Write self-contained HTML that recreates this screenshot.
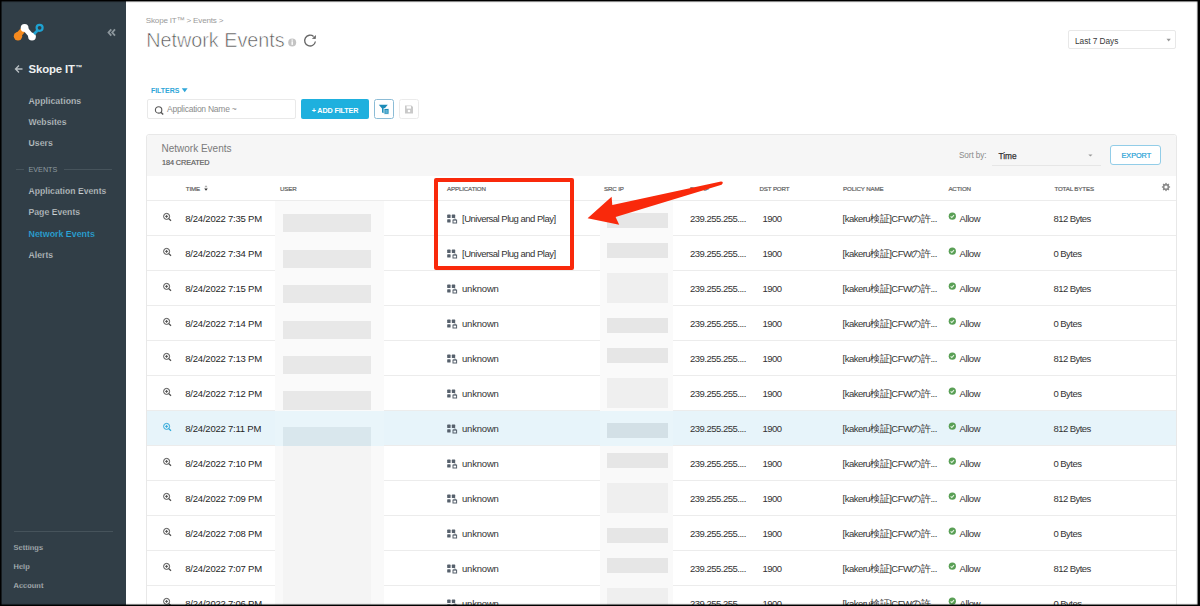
<!DOCTYPE html>
<html><head><meta charset="utf-8"><style>
html,body{margin:0;padding:0;}
body{width:1200px;height:606px;overflow:hidden;background:#000;position:relative;font-family:"Liberation Sans", sans-serif;}
#app{position:absolute;left:1px;top:1px;width:1197px;height:604px;overflow:hidden;background:#fff;}
#inner{position:absolute;left:-1px;top:-1px;width:1200px;height:606px;}
.t{position:absolute;white-space:nowrap;line-height:1;}
sup{font-size:0.62em;vertical-align:0;position:relative;top:-0.42em;margin-left:0.5px}
</style></head><body><div id="app"><div id="inner">
<div style="position:absolute;left:0;top:0;width:126px;height:606px;background:#313e47"></div>
<svg style="position:absolute;left:0;top:0" width="126" height="90" viewBox="0 0 126 90">
<path d="M16 33.5 L23 26 L26.5 30 L19.5 38.5 Z" fill="#f58a1f"/>
<circle cx="18" cy="36.3" r="4.2" fill="#f58a1f"/>
<line x1="24.6" y1="28" x2="32" y2="36.6" stroke="#fff" stroke-width="5"/>
<circle cx="24.6" cy="27.9" r="3.9" fill="#fff"/>
<circle cx="32" cy="36.6" r="3.9" fill="#fff"/>
<line x1="34" y1="34" x2="38" y2="30" stroke="#1ea3d3" stroke-width="2.6"/>
<circle cx="39.6" cy="27.8" r="3" fill="#313e47" stroke="#1ea3d3" stroke-width="2.2"/>
<path d="M111.3 29.3 L108.5 32.5 L111.3 35.7 M115 29.3 L112.2 32.5 L115 35.7" fill="none" stroke="#8d979d" stroke-width="1.8"/>
<path d="M22.5 69 L15.5 69 M19 65.5 L15.5 69 L19 72.5" fill="none" stroke="#b8bfc3" stroke-width="1.3"/>
</svg>
<div class="t" style="left:28.6px;top:64.11px;font-size:11.4px;color:#eef0f1;font-weight:700;letter-spacing:-0.15px;">Skope IT<sup>™</sup></div>
<div class="t" style="left:28.5px;top:96.86px;font-size:8.7px;color:#cdd2d5;font-weight:700;letter-spacing:0.05px;-webkit-text-stroke:0.25px #313e47;">Applications</div>
<div class="t" style="left:28.5px;top:118.08px;font-size:8.6px;color:#cdd2d5;font-weight:700;letter-spacing:0.05px;-webkit-text-stroke:0.25px #313e47;">Websites</div>
<div class="t" style="left:28.5px;top:139.26px;font-size:8.7px;color:#cdd2d5;font-weight:700;letter-spacing:0.05px;-webkit-text-stroke:0.25px #313e47;">Users</div>
<div style="position:absolute;left:16px;top:169px;width:8px;height:1px;background:#46535b"></div>
<div style="position:absolute;left:64px;top:169px;width:48px;height:1px;background:#46535b"></div>
<div class="t" style="left:28.5px;top:166.06px;font-size:7.2px;color:#8e999f;font-weight:400;letter-spacing:0px;">EVENTS</div>
<div class="t" style="left:28.5px;top:186.88px;font-size:8.55px;color:#cdd2d5;font-weight:700;letter-spacing:0.05px;-webkit-text-stroke:0.25px #313e47;">Application Events</div>
<div class="t" style="left:28.5px;top:208.08px;font-size:8.6px;color:#cdd2d5;font-weight:700;letter-spacing:0.05px;-webkit-text-stroke:0.25px #313e47;">Page Events</div>
<div class="t" style="left:28.5px;top:230.05px;font-size:8.85px;color:#29a8de;font-weight:700;letter-spacing:0px;-webkit-text-stroke:0.15px #313e47;">Network Events</div>
<div class="t" style="left:28.5px;top:250.88px;font-size:8.6px;color:#cdd2d5;font-weight:700;letter-spacing:0.05px;-webkit-text-stroke:0.25px #313e47;">Alerts</div>
<div style="position:absolute;left:14px;top:531px;width:99px;height:1px;background:#46535b"></div>
<div class="t" style="left:13.5px;top:544.03px;font-size:7.4px;color:#c3c9cc;font-weight:700;letter-spacing:0.05px;-webkit-text-stroke:0.25px #313e47;">Settings</div>
<div class="t" style="left:13.5px;top:562.83px;font-size:7.4px;color:#c3c9cc;font-weight:700;letter-spacing:0.05px;-webkit-text-stroke:0.25px #313e47;">Help</div>
<div class="t" style="left:13.5px;top:581.63px;font-size:7.4px;color:#c3c9cc;font-weight:700;letter-spacing:0.05px;-webkit-text-stroke:0.25px #313e47;">Account</div>
<div class="t" style="left:145.8px;top:16.94px;font-size:8.1px;color:#9a9a9a;font-weight:400;letter-spacing:-0.2px;">Skope IT™ &gt; Events &gt;</div>
<div class="t" style="left:146.2px;top:31.42px;font-size:19.8px;color:#555;font-weight:400;letter-spacing:0px;-webkit-text-stroke:0.6px #fff;">Network Events</div>
<svg style="position:absolute;left:280px;top:28px" width="45" height="24" viewBox="280 28 45 24">
<circle cx="292.2" cy="42.5" r="4" fill="#c4c4c4"/>
<rect x="291.5" y="41.3" width="1.4" height="3.6" fill="#fff"/>
<rect x="291.5" y="39.5" width="1.4" height="1.2" fill="#fff"/>
<path d="M315.4 41.5 A5.4 5.4 0 1 1 313.6 36.5" fill="none" stroke="#666" stroke-width="1.35"/>
<path d="M316 34.9 L315.7 38.9 L311.9 38.7 Z" fill="#666"/>
</svg>
<div style="position:absolute;left:1068px;top:30px;width:106px;height:17px;border:1px solid #e8e8e8;border-radius:2px;background:#fff"></div>
<div class="t" style="left:1075.0px;top:36.52px;font-size:8.3px;color:#3a3a3a;font-weight:400;letter-spacing:-0.05px;">Last 7 Days</div>
<svg style="position:absolute;left:1160px;top:34px" width="16" height="12"><path d="M6.5 4.8 L10.8 4.8 L8.65 7.4 Z" fill="#999"/></svg>
<div class="t" style="left:151.0px;top:86.89px;font-size:7.0px;color:#2fa6d8;font-weight:700;letter-spacing:-0.05px;">FILTERS</div>
<svg style="position:absolute;left:180px;top:86px" width="10" height="8"><path d="M1.8 2.3 L7.6 2.3 L4.7 6.3 Z" fill="#2fa6d8"/></svg>
<div style="position:absolute;left:147px;top:99px;width:147px;height:18px;border:1px solid #e9e9e9;border-radius:2px;background:#fff"></div>
<svg style="position:absolute;left:152px;top:103px" width="14" height="14"><circle cx="6.6" cy="6.9" r="3.2" fill="none" stroke="#5a5a5a" stroke-width="1.15"/><path d="M8.9 9.2 L11.2 11.5" stroke="#5a5a5a" stroke-width="1.4"/></svg>
<div class="t" style="left:167.0px;top:105.09px;font-size:8.5px;color:#8c8c8c;font-weight:400;letter-spacing:-0.25px;">Application Name ~</div>
<div style="position:absolute;left:301px;top:99px;width:68px;height:20px;background:#1eb0de;border-radius:2px"></div>
<div class="t" style="left:311.7px;top:106.66px;font-size:7.2px;color:#ffffff;font-weight:700;letter-spacing:-0.12px;">+ ADD FILTER</div>
<div style="position:absolute;left:374px;top:99px;width:18px;height:18px;border:1px solid #8cbcd6;border-radius:2.5px;background:#fff"></div>
<svg style="position:absolute;left:374px;top:99px" width="20" height="20">
<path d="M4.8 5.8 L13.8 5.8 L10.6 9.6 L10.6 14.6 L8 13.4 L8 9.6 Z" fill="#1d8cb8"/>
<rect x="10" y="9.6" width="5" height="5.6" fill="#1d8cb8" stroke="#fff" stroke-width="0.8"/>
<rect x="11.3" y="11" width="2.4" height="3" fill="#5fb3d6"/>
</svg>
<div style="position:absolute;left:399px;top:99px;width:18px;height:18px;border:1px solid #ebebeb;border-radius:2.5px;background:#fff"></div>
<svg style="position:absolute;left:399px;top:99px" width="20" height="20">
<path d="M6 6.5 L12.5 6.5 L14 8 L14 14.5 L6 14.5 Z" fill="#c9c9c9"/>
<rect x="7.6" y="7.2" width="4.4" height="2.4" fill="#fff"/>
<circle cx="10" cy="12" r="1.3" fill="#fff"/>
</svg>
<div style="position:absolute;left:146px;top:134px;width:1029px;height:482px;border:1px solid #e8e8e8;border-radius:3px;background:#fff"></div>
<div style="position:absolute;left:147px;top:135px;width:1029px;height:41px;background:#f6f6f6;border-radius:3px 3px 0 0"></div>
<div class="t" style="left:161.5px;top:143.69px;font-size:10px;color:#7a7a7a;font-weight:400;letter-spacing:0px;">Network Events</div>
<div class="t" style="left:162.0px;top:158.85px;font-size:7.3px;color:#606060;font-weight:400;letter-spacing:-0.1px;-webkit-text-stroke:0.2px #606060;">184 CREATED</div>
<div class="t" style="left:959.0px;top:151.53px;font-size:8.2px;color:#8a8a8a;font-weight:400;letter-spacing:-0.1px;">Sort by:</div>
<div class="t" style="left:998.5px;top:151.52px;font-size:8.3px;color:#333;font-weight:400;letter-spacing:0px;-webkit-text-stroke:0.25px #333;">Time</div>
<div style="position:absolute;left:992px;top:165px;width:109px;height:1px;background:#e6e6e6"></div>
<svg style="position:absolute;left:1085px;top:151px" width="10" height="8"><path d="M3.3 3.4 L7.5 3.4 L5.4 5.6 Z" fill="#999"/></svg>
<div style="position:absolute;left:1110px;top:145px;width:49px;height:18px;border:1px solid #92cde8;border-radius:3px;background:#fff"></div>
<div class="t" style="left:1121.5px;top:151.65px;font-size:7.3px;color:#1f9fd6;font-weight:400;letter-spacing:-0.05px;-webkit-text-stroke:0.2px #1f9fd6;">EXPORT</div>
<div class="t" style="left:185.8px;top:185.99px;font-size:6.2px;color:#626262;font-weight:400;letter-spacing:-0.15px;-webkit-text-stroke:0.2px #626262;">TIME</div>
<svg style="position:absolute;left:203px;top:184px" width="6" height="9"><path d="M1.4 3.3 L3 1.3 L4.6 3.3 Z" fill="#aaa"/><path d="M1.2 4.4 L4.8 4.4 L3 6.8 Z" fill="#333"/></svg>
<div class="t" style="left:280.0px;top:185.99px;font-size:6.2px;color:#626262;font-weight:400;letter-spacing:-0.15px;-webkit-text-stroke:0.2px #626262;">USER</div>
<div class="t" style="left:447.0px;top:185.99px;font-size:6.2px;color:#626262;font-weight:400;letter-spacing:-0.15px;-webkit-text-stroke:0.2px #626262;">APPLICATION</div>
<div class="t" style="left:604.0px;top:185.99px;font-size:6.2px;color:#626262;font-weight:400;letter-spacing:-0.15px;-webkit-text-stroke:0.2px #626262;">SRC IP</div>
<div class="t" style="left:690.0px;top:185.99px;font-size:6.2px;color:#626262;font-weight:400;letter-spacing:-0.15px;-webkit-text-stroke:0.2px #626262;">DST IP</div>
<div class="t" style="left:759.5px;top:185.99px;font-size:6.2px;color:#626262;font-weight:400;letter-spacing:-0.15px;-webkit-text-stroke:0.2px #626262;">DST PORT</div>
<div class="t" style="left:843.0px;top:185.99px;font-size:6.2px;color:#626262;font-weight:400;letter-spacing:-0.15px;-webkit-text-stroke:0.2px #626262;">POLICY NAME</div>
<div class="t" style="left:948.4px;top:185.99px;font-size:6.2px;color:#626262;font-weight:400;letter-spacing:-0.15px;-webkit-text-stroke:0.2px #626262;">ACTION</div>
<div class="t" style="left:1054.4px;top:185.99px;font-size:6.2px;color:#626262;font-weight:400;letter-spacing:-0.15px;-webkit-text-stroke:0.2px #626262;">TOTAL BYTES</div>
<svg style="position:absolute;left:1160px;top:181px" width="12" height="12" viewBox="0 0 12 12">
<g fill="#8c8c8c"><circle cx="6" cy="6" r="3.2"/>
<rect x="5.3" y="1.9" width="1.4" height="8.2"/><rect x="5.3" y="1.9" width="1.4" height="8.2" transform="rotate(90 6 6)"/>
<rect x="5.3" y="1.9" width="1.4" height="8.2" transform="rotate(45 6 6)"/><rect x="5.3" y="1.9" width="1.4" height="8.2" transform="rotate(-45 6 6)"/>
</g><circle cx="6" cy="6" r="1.6" fill="#fff"/></svg>
<div style="position:absolute;left:147px;top:200.3px;width:1029px;height:1px;background:#ececec"></div>
<div style="position:absolute;left:147px;top:235.3px;width:1029px;height:1px;background:#ececec"></div>
<svg style="position:absolute;left:162px;top:212.3px" width="11" height="11" viewBox="0 0 11 11"><circle cx="4.6" cy="4.4" r="3" fill="none" stroke="#4a4a4a" stroke-width="1.0"/><path d="M6.8 6.6 L9 8.8" stroke="#4a4a4a" stroke-width="1.3"/><path d="M4.6 2.9 V5.9 M3.1 4.4 H6.1" stroke="#4a4a4a" stroke-width="0.9"/></svg>
<div class="t" style="left:185.3px;top:213.56px;font-size:9.5px;color:#262626;font-weight:400;letter-spacing:-0.22px;">8/24/2022 7:35 PM</div>
<svg style="position:absolute;left:446px;top:213.9px" width="12" height="10" viewBox="0 0 12 10"><g fill="#56606c"><rect x="1.2" y="0.6" width="3.4" height="3.4" rx="0.6"/><rect x="5.8" y="0.6" width="3.4" height="3.4" rx="0.6"/><rect x="1.2" y="5.2" width="3.4" height="3.4" rx="0.6"/></g><rect x="7" y="6.1" width="3.6" height="2.9" fill="none" stroke="#56606c" stroke-width="1"/><path d="M7.9 6.1 V5.1 H9.7 V6.1" fill="none" stroke="#56606c" stroke-width="0.8"/></svg>
<div class="t" style="left:462.0px;top:213.56px;font-size:9.5px;color:#333;font-weight:400;letter-spacing:-0.5px;">[Universal Plug and Play]</div>
<div class="t" style="left:690.0px;top:213.56px;font-size:9.5px;color:#333;font-weight:400;letter-spacing:-0.5px;">239.255.255....</div>
<div class="t" style="left:762.5px;top:213.56px;font-size:9.5px;color:#333;font-weight:400;letter-spacing:-0.55px;">1900</div>
<div class="t" style="left:842.5px;top:213.56px;font-size:9.5px;color:#333;font-weight:400;letter-spacing:-0.5px;">[kakeru検証]CFWの許...</div>
<svg style="position:absolute;left:947px;top:211.3px" width="10" height="10" viewBox="0 0 10 10"><circle cx="5.3" cy="5.2" r="3.6" fill="#599f55"/><path d="M3.6 5.3 L4.8 6.5 L7 4.1" fill="none" stroke="#e8f5e6" stroke-width="1.1"/></svg>
<div class="t" style="left:959.5px;top:213.56px;font-size:9.5px;color:#333;font-weight:400;letter-spacing:-0.4px;">Allow</div>
<div class="t" style="left:1053.5px;top:213.56px;font-size:9.5px;color:#333;font-weight:400;letter-spacing:-0.55px;">812 Bytes</div>
<div style="position:absolute;left:147px;top:270.3px;width:1029px;height:1px;background:#ececec"></div>
<svg style="position:absolute;left:162px;top:247.3px" width="11" height="11" viewBox="0 0 11 11"><circle cx="4.6" cy="4.4" r="3" fill="none" stroke="#4a4a4a" stroke-width="1.0"/><path d="M6.8 6.6 L9 8.8" stroke="#4a4a4a" stroke-width="1.3"/><path d="M4.6 2.9 V5.9 M3.1 4.4 H6.1" stroke="#4a4a4a" stroke-width="0.9"/></svg>
<div class="t" style="left:185.3px;top:248.56px;font-size:9.5px;color:#262626;font-weight:400;letter-spacing:-0.22px;">8/24/2022 7:34 PM</div>
<svg style="position:absolute;left:446px;top:248.9px" width="12" height="10" viewBox="0 0 12 10"><g fill="#56606c"><rect x="1.2" y="0.6" width="3.4" height="3.4" rx="0.6"/><rect x="5.8" y="0.6" width="3.4" height="3.4" rx="0.6"/><rect x="1.2" y="5.2" width="3.4" height="3.4" rx="0.6"/></g><rect x="7" y="6.1" width="3.6" height="2.9" fill="none" stroke="#56606c" stroke-width="1"/><path d="M7.9 6.1 V5.1 H9.7 V6.1" fill="none" stroke="#56606c" stroke-width="0.8"/></svg>
<div class="t" style="left:462.0px;top:248.56px;font-size:9.5px;color:#333;font-weight:400;letter-spacing:-0.5px;">[Universal Plug and Play]</div>
<div class="t" style="left:690.0px;top:248.56px;font-size:9.5px;color:#333;font-weight:400;letter-spacing:-0.5px;">239.255.255....</div>
<div class="t" style="left:762.5px;top:248.56px;font-size:9.5px;color:#333;font-weight:400;letter-spacing:-0.55px;">1900</div>
<div class="t" style="left:842.5px;top:248.56px;font-size:9.5px;color:#333;font-weight:400;letter-spacing:-0.5px;">[kakeru検証]CFWの許...</div>
<svg style="position:absolute;left:947px;top:246.3px" width="10" height="10" viewBox="0 0 10 10"><circle cx="5.3" cy="5.2" r="3.6" fill="#599f55"/><path d="M3.6 5.3 L4.8 6.5 L7 4.1" fill="none" stroke="#e8f5e6" stroke-width="1.1"/></svg>
<div class="t" style="left:959.5px;top:248.56px;font-size:9.5px;color:#333;font-weight:400;letter-spacing:-0.4px;">Allow</div>
<div class="t" style="left:1053.5px;top:248.56px;font-size:9.5px;color:#333;font-weight:400;letter-spacing:-0.55px;">0 Bytes</div>
<div style="position:absolute;left:147px;top:305.3px;width:1029px;height:1px;background:#ececec"></div>
<svg style="position:absolute;left:162px;top:282.3px" width="11" height="11" viewBox="0 0 11 11"><circle cx="4.6" cy="4.4" r="3" fill="none" stroke="#4a4a4a" stroke-width="1.0"/><path d="M6.8 6.6 L9 8.8" stroke="#4a4a4a" stroke-width="1.3"/><path d="M4.6 2.9 V5.9 M3.1 4.4 H6.1" stroke="#4a4a4a" stroke-width="0.9"/></svg>
<div class="t" style="left:185.3px;top:283.56px;font-size:9.5px;color:#262626;font-weight:400;letter-spacing:-0.22px;">8/24/2022 7:15 PM</div>
<svg style="position:absolute;left:446px;top:283.9px" width="12" height="10" viewBox="0 0 12 10"><g fill="#56606c"><rect x="1.2" y="0.6" width="3.4" height="3.4" rx="0.6"/><rect x="5.8" y="0.6" width="3.4" height="3.4" rx="0.6"/><rect x="1.2" y="5.2" width="3.4" height="3.4" rx="0.6"/></g><rect x="7" y="6.1" width="3.6" height="2.9" fill="none" stroke="#56606c" stroke-width="1"/><path d="M7.9 6.1 V5.1 H9.7 V6.1" fill="none" stroke="#56606c" stroke-width="0.8"/></svg>
<div class="t" style="left:462.0px;top:283.56px;font-size:9.5px;color:#333;font-weight:400;letter-spacing:-0.2px;">unknown</div>
<div class="t" style="left:690.0px;top:283.56px;font-size:9.5px;color:#333;font-weight:400;letter-spacing:-0.5px;">239.255.255....</div>
<div class="t" style="left:762.5px;top:283.56px;font-size:9.5px;color:#333;font-weight:400;letter-spacing:-0.55px;">1900</div>
<div class="t" style="left:842.5px;top:283.56px;font-size:9.5px;color:#333;font-weight:400;letter-spacing:-0.5px;">[kakeru検証]CFWの許...</div>
<svg style="position:absolute;left:947px;top:281.3px" width="10" height="10" viewBox="0 0 10 10"><circle cx="5.3" cy="5.2" r="3.6" fill="#599f55"/><path d="M3.6 5.3 L4.8 6.5 L7 4.1" fill="none" stroke="#e8f5e6" stroke-width="1.1"/></svg>
<div class="t" style="left:959.5px;top:283.56px;font-size:9.5px;color:#333;font-weight:400;letter-spacing:-0.4px;">Allow</div>
<div class="t" style="left:1053.5px;top:283.56px;font-size:9.5px;color:#333;font-weight:400;letter-spacing:-0.55px;">812 Bytes</div>
<div style="position:absolute;left:147px;top:340.3px;width:1029px;height:1px;background:#ececec"></div>
<svg style="position:absolute;left:162px;top:317.3px" width="11" height="11" viewBox="0 0 11 11"><circle cx="4.6" cy="4.4" r="3" fill="none" stroke="#4a4a4a" stroke-width="1.0"/><path d="M6.8 6.6 L9 8.8" stroke="#4a4a4a" stroke-width="1.3"/><path d="M4.6 2.9 V5.9 M3.1 4.4 H6.1" stroke="#4a4a4a" stroke-width="0.9"/></svg>
<div class="t" style="left:185.3px;top:318.56px;font-size:9.5px;color:#262626;font-weight:400;letter-spacing:-0.22px;">8/24/2022 7:14 PM</div>
<svg style="position:absolute;left:446px;top:318.9px" width="12" height="10" viewBox="0 0 12 10"><g fill="#56606c"><rect x="1.2" y="0.6" width="3.4" height="3.4" rx="0.6"/><rect x="5.8" y="0.6" width="3.4" height="3.4" rx="0.6"/><rect x="1.2" y="5.2" width="3.4" height="3.4" rx="0.6"/></g><rect x="7" y="6.1" width="3.6" height="2.9" fill="none" stroke="#56606c" stroke-width="1"/><path d="M7.9 6.1 V5.1 H9.7 V6.1" fill="none" stroke="#56606c" stroke-width="0.8"/></svg>
<div class="t" style="left:462.0px;top:318.56px;font-size:9.5px;color:#333;font-weight:400;letter-spacing:-0.2px;">unknown</div>
<div class="t" style="left:690.0px;top:318.56px;font-size:9.5px;color:#333;font-weight:400;letter-spacing:-0.5px;">239.255.255....</div>
<div class="t" style="left:762.5px;top:318.56px;font-size:9.5px;color:#333;font-weight:400;letter-spacing:-0.55px;">1900</div>
<div class="t" style="left:842.5px;top:318.56px;font-size:9.5px;color:#333;font-weight:400;letter-spacing:-0.5px;">[kakeru検証]CFWの許...</div>
<svg style="position:absolute;left:947px;top:316.3px" width="10" height="10" viewBox="0 0 10 10"><circle cx="5.3" cy="5.2" r="3.6" fill="#599f55"/><path d="M3.6 5.3 L4.8 6.5 L7 4.1" fill="none" stroke="#e8f5e6" stroke-width="1.1"/></svg>
<div class="t" style="left:959.5px;top:318.56px;font-size:9.5px;color:#333;font-weight:400;letter-spacing:-0.4px;">Allow</div>
<div class="t" style="left:1053.5px;top:318.56px;font-size:9.5px;color:#333;font-weight:400;letter-spacing:-0.55px;">0 Bytes</div>
<div style="position:absolute;left:147px;top:375.3px;width:1029px;height:1px;background:#ececec"></div>
<svg style="position:absolute;left:162px;top:352.3px" width="11" height="11" viewBox="0 0 11 11"><circle cx="4.6" cy="4.4" r="3" fill="none" stroke="#4a4a4a" stroke-width="1.0"/><path d="M6.8 6.6 L9 8.8" stroke="#4a4a4a" stroke-width="1.3"/><path d="M4.6 2.9 V5.9 M3.1 4.4 H6.1" stroke="#4a4a4a" stroke-width="0.9"/></svg>
<div class="t" style="left:185.3px;top:353.56px;font-size:9.5px;color:#262626;font-weight:400;letter-spacing:-0.22px;">8/24/2022 7:13 PM</div>
<svg style="position:absolute;left:446px;top:353.9px" width="12" height="10" viewBox="0 0 12 10"><g fill="#56606c"><rect x="1.2" y="0.6" width="3.4" height="3.4" rx="0.6"/><rect x="5.8" y="0.6" width="3.4" height="3.4" rx="0.6"/><rect x="1.2" y="5.2" width="3.4" height="3.4" rx="0.6"/></g><rect x="7" y="6.1" width="3.6" height="2.9" fill="none" stroke="#56606c" stroke-width="1"/><path d="M7.9 6.1 V5.1 H9.7 V6.1" fill="none" stroke="#56606c" stroke-width="0.8"/></svg>
<div class="t" style="left:462.0px;top:353.56px;font-size:9.5px;color:#333;font-weight:400;letter-spacing:-0.2px;">unknown</div>
<div class="t" style="left:690.0px;top:353.56px;font-size:9.5px;color:#333;font-weight:400;letter-spacing:-0.5px;">239.255.255....</div>
<div class="t" style="left:762.5px;top:353.56px;font-size:9.5px;color:#333;font-weight:400;letter-spacing:-0.55px;">1900</div>
<div class="t" style="left:842.5px;top:353.56px;font-size:9.5px;color:#333;font-weight:400;letter-spacing:-0.5px;">[kakeru検証]CFWの許...</div>
<svg style="position:absolute;left:947px;top:351.3px" width="10" height="10" viewBox="0 0 10 10"><circle cx="5.3" cy="5.2" r="3.6" fill="#599f55"/><path d="M3.6 5.3 L4.8 6.5 L7 4.1" fill="none" stroke="#e8f5e6" stroke-width="1.1"/></svg>
<div class="t" style="left:959.5px;top:353.56px;font-size:9.5px;color:#333;font-weight:400;letter-spacing:-0.4px;">Allow</div>
<div class="t" style="left:1053.5px;top:353.56px;font-size:9.5px;color:#333;font-weight:400;letter-spacing:-0.55px;">812 Bytes</div>
<div style="position:absolute;left:147px;top:410.3px;width:1029px;height:1px;background:#ececec"></div>
<svg style="position:absolute;left:162px;top:387.3px" width="11" height="11" viewBox="0 0 11 11"><circle cx="4.6" cy="4.4" r="3" fill="none" stroke="#4a4a4a" stroke-width="1.0"/><path d="M6.8 6.6 L9 8.8" stroke="#4a4a4a" stroke-width="1.3"/><path d="M4.6 2.9 V5.9 M3.1 4.4 H6.1" stroke="#4a4a4a" stroke-width="0.9"/></svg>
<div class="t" style="left:185.3px;top:388.56px;font-size:9.5px;color:#262626;font-weight:400;letter-spacing:-0.22px;">8/24/2022 7:12 PM</div>
<svg style="position:absolute;left:446px;top:388.9px" width="12" height="10" viewBox="0 0 12 10"><g fill="#56606c"><rect x="1.2" y="0.6" width="3.4" height="3.4" rx="0.6"/><rect x="5.8" y="0.6" width="3.4" height="3.4" rx="0.6"/><rect x="1.2" y="5.2" width="3.4" height="3.4" rx="0.6"/></g><rect x="7" y="6.1" width="3.6" height="2.9" fill="none" stroke="#56606c" stroke-width="1"/><path d="M7.9 6.1 V5.1 H9.7 V6.1" fill="none" stroke="#56606c" stroke-width="0.8"/></svg>
<div class="t" style="left:462.0px;top:388.56px;font-size:9.5px;color:#333;font-weight:400;letter-spacing:-0.2px;">unknown</div>
<div class="t" style="left:690.0px;top:388.56px;font-size:9.5px;color:#333;font-weight:400;letter-spacing:-0.5px;">239.255.255....</div>
<div class="t" style="left:762.5px;top:388.56px;font-size:9.5px;color:#333;font-weight:400;letter-spacing:-0.55px;">1900</div>
<div class="t" style="left:842.5px;top:388.56px;font-size:9.5px;color:#333;font-weight:400;letter-spacing:-0.5px;">[kakeru検証]CFWの許...</div>
<svg style="position:absolute;left:947px;top:386.3px" width="10" height="10" viewBox="0 0 10 10"><circle cx="5.3" cy="5.2" r="3.6" fill="#599f55"/><path d="M3.6 5.3 L4.8 6.5 L7 4.1" fill="none" stroke="#e8f5e6" stroke-width="1.1"/></svg>
<div class="t" style="left:959.5px;top:388.56px;font-size:9.5px;color:#333;font-weight:400;letter-spacing:-0.4px;">Allow</div>
<div class="t" style="left:1053.5px;top:388.56px;font-size:9.5px;color:#333;font-weight:400;letter-spacing:-0.55px;">0 Bytes</div>
<div style="position:absolute;left:147px;top:411.0px;width:1029px;height:35px;background:#e7f4fa"></div>
<div style="position:absolute;left:147px;top:445.3px;width:1029px;height:1px;background:#ececec"></div>
<svg style="position:absolute;left:162px;top:422.3px" width="11" height="11" viewBox="0 0 11 11"><circle cx="4.6" cy="4.4" r="3" fill="none" stroke="#2aa6d8" stroke-width="1.0"/><path d="M6.8 6.6 L9 8.8" stroke="#2aa6d8" stroke-width="1.3"/><path d="M4.6 2.9 V5.9 M3.1 4.4 H6.1" stroke="#2aa6d8" stroke-width="0.9"/></svg>
<div class="t" style="left:185.3px;top:423.56px;font-size:9.5px;color:#262626;font-weight:400;letter-spacing:-0.22px;">8/24/2022 7:11 PM</div>
<svg style="position:absolute;left:446px;top:423.9px" width="12" height="10" viewBox="0 0 12 10"><g fill="#56606c"><rect x="1.2" y="0.6" width="3.4" height="3.4" rx="0.6"/><rect x="5.8" y="0.6" width="3.4" height="3.4" rx="0.6"/><rect x="1.2" y="5.2" width="3.4" height="3.4" rx="0.6"/></g><rect x="7" y="6.1" width="3.6" height="2.9" fill="none" stroke="#56606c" stroke-width="1"/><path d="M7.9 6.1 V5.1 H9.7 V6.1" fill="none" stroke="#56606c" stroke-width="0.8"/></svg>
<div class="t" style="left:462.0px;top:423.56px;font-size:9.5px;color:#333;font-weight:400;letter-spacing:-0.2px;">unknown</div>
<div class="t" style="left:690.0px;top:423.56px;font-size:9.5px;color:#333;font-weight:400;letter-spacing:-0.5px;">239.255.255....</div>
<div class="t" style="left:762.5px;top:423.56px;font-size:9.5px;color:#333;font-weight:400;letter-spacing:-0.55px;">1900</div>
<div class="t" style="left:842.5px;top:423.56px;font-size:9.5px;color:#333;font-weight:400;letter-spacing:-0.5px;">[kakeru検証]CFWの許...</div>
<svg style="position:absolute;left:947px;top:421.3px" width="10" height="10" viewBox="0 0 10 10"><circle cx="5.3" cy="5.2" r="3.6" fill="#599f55"/><path d="M3.6 5.3 L4.8 6.5 L7 4.1" fill="none" stroke="#e8f5e6" stroke-width="1.1"/></svg>
<div class="t" style="left:959.5px;top:423.56px;font-size:9.5px;color:#333;font-weight:400;letter-spacing:-0.4px;">Allow</div>
<div class="t" style="left:1053.5px;top:423.56px;font-size:9.5px;color:#333;font-weight:400;letter-spacing:-0.55px;">812 Bytes</div>
<div style="position:absolute;left:147px;top:480.3px;width:1029px;height:1px;background:#ececec"></div>
<svg style="position:absolute;left:162px;top:457.3px" width="11" height="11" viewBox="0 0 11 11"><circle cx="4.6" cy="4.4" r="3" fill="none" stroke="#4a4a4a" stroke-width="1.0"/><path d="M6.8 6.6 L9 8.8" stroke="#4a4a4a" stroke-width="1.3"/><path d="M4.6 2.9 V5.9 M3.1 4.4 H6.1" stroke="#4a4a4a" stroke-width="0.9"/></svg>
<div class="t" style="left:185.3px;top:458.56px;font-size:9.5px;color:#262626;font-weight:400;letter-spacing:-0.22px;">8/24/2022 7:10 PM</div>
<svg style="position:absolute;left:446px;top:458.9px" width="12" height="10" viewBox="0 0 12 10"><g fill="#56606c"><rect x="1.2" y="0.6" width="3.4" height="3.4" rx="0.6"/><rect x="5.8" y="0.6" width="3.4" height="3.4" rx="0.6"/><rect x="1.2" y="5.2" width="3.4" height="3.4" rx="0.6"/></g><rect x="7" y="6.1" width="3.6" height="2.9" fill="none" stroke="#56606c" stroke-width="1"/><path d="M7.9 6.1 V5.1 H9.7 V6.1" fill="none" stroke="#56606c" stroke-width="0.8"/></svg>
<div class="t" style="left:462.0px;top:458.56px;font-size:9.5px;color:#333;font-weight:400;letter-spacing:-0.2px;">unknown</div>
<div class="t" style="left:690.0px;top:458.56px;font-size:9.5px;color:#333;font-weight:400;letter-spacing:-0.5px;">239.255.255....</div>
<div class="t" style="left:762.5px;top:458.56px;font-size:9.5px;color:#333;font-weight:400;letter-spacing:-0.55px;">1900</div>
<div class="t" style="left:842.5px;top:458.56px;font-size:9.5px;color:#333;font-weight:400;letter-spacing:-0.5px;">[kakeru検証]CFWの許...</div>
<svg style="position:absolute;left:947px;top:456.3px" width="10" height="10" viewBox="0 0 10 10"><circle cx="5.3" cy="5.2" r="3.6" fill="#599f55"/><path d="M3.6 5.3 L4.8 6.5 L7 4.1" fill="none" stroke="#e8f5e6" stroke-width="1.1"/></svg>
<div class="t" style="left:959.5px;top:458.56px;font-size:9.5px;color:#333;font-weight:400;letter-spacing:-0.4px;">Allow</div>
<div class="t" style="left:1053.5px;top:458.56px;font-size:9.5px;color:#333;font-weight:400;letter-spacing:-0.55px;">0 Bytes</div>
<div style="position:absolute;left:147px;top:515.3px;width:1029px;height:1px;background:#ececec"></div>
<svg style="position:absolute;left:162px;top:492.3px" width="11" height="11" viewBox="0 0 11 11"><circle cx="4.6" cy="4.4" r="3" fill="none" stroke="#4a4a4a" stroke-width="1.0"/><path d="M6.8 6.6 L9 8.8" stroke="#4a4a4a" stroke-width="1.3"/><path d="M4.6 2.9 V5.9 M3.1 4.4 H6.1" stroke="#4a4a4a" stroke-width="0.9"/></svg>
<div class="t" style="left:185.3px;top:493.56px;font-size:9.5px;color:#262626;font-weight:400;letter-spacing:-0.22px;">8/24/2022 7:09 PM</div>
<svg style="position:absolute;left:446px;top:493.9px" width="12" height="10" viewBox="0 0 12 10"><g fill="#56606c"><rect x="1.2" y="0.6" width="3.4" height="3.4" rx="0.6"/><rect x="5.8" y="0.6" width="3.4" height="3.4" rx="0.6"/><rect x="1.2" y="5.2" width="3.4" height="3.4" rx="0.6"/></g><rect x="7" y="6.1" width="3.6" height="2.9" fill="none" stroke="#56606c" stroke-width="1"/><path d="M7.9 6.1 V5.1 H9.7 V6.1" fill="none" stroke="#56606c" stroke-width="0.8"/></svg>
<div class="t" style="left:462.0px;top:493.56px;font-size:9.5px;color:#333;font-weight:400;letter-spacing:-0.2px;">unknown</div>
<div class="t" style="left:690.0px;top:493.56px;font-size:9.5px;color:#333;font-weight:400;letter-spacing:-0.5px;">239.255.255....</div>
<div class="t" style="left:762.5px;top:493.56px;font-size:9.5px;color:#333;font-weight:400;letter-spacing:-0.55px;">1900</div>
<div class="t" style="left:842.5px;top:493.56px;font-size:9.5px;color:#333;font-weight:400;letter-spacing:-0.5px;">[kakeru検証]CFWの許...</div>
<svg style="position:absolute;left:947px;top:491.3px" width="10" height="10" viewBox="0 0 10 10"><circle cx="5.3" cy="5.2" r="3.6" fill="#599f55"/><path d="M3.6 5.3 L4.8 6.5 L7 4.1" fill="none" stroke="#e8f5e6" stroke-width="1.1"/></svg>
<div class="t" style="left:959.5px;top:493.56px;font-size:9.5px;color:#333;font-weight:400;letter-spacing:-0.4px;">Allow</div>
<div class="t" style="left:1053.5px;top:493.56px;font-size:9.5px;color:#333;font-weight:400;letter-spacing:-0.55px;">812 Bytes</div>
<div style="position:absolute;left:147px;top:550.3px;width:1029px;height:1px;background:#ececec"></div>
<svg style="position:absolute;left:162px;top:527.3px" width="11" height="11" viewBox="0 0 11 11"><circle cx="4.6" cy="4.4" r="3" fill="none" stroke="#4a4a4a" stroke-width="1.0"/><path d="M6.8 6.6 L9 8.8" stroke="#4a4a4a" stroke-width="1.3"/><path d="M4.6 2.9 V5.9 M3.1 4.4 H6.1" stroke="#4a4a4a" stroke-width="0.9"/></svg>
<div class="t" style="left:185.3px;top:528.56px;font-size:9.5px;color:#262626;font-weight:400;letter-spacing:-0.22px;">8/24/2022 7:08 PM</div>
<svg style="position:absolute;left:446px;top:528.9px" width="12" height="10" viewBox="0 0 12 10"><g fill="#56606c"><rect x="1.2" y="0.6" width="3.4" height="3.4" rx="0.6"/><rect x="5.8" y="0.6" width="3.4" height="3.4" rx="0.6"/><rect x="1.2" y="5.2" width="3.4" height="3.4" rx="0.6"/></g><rect x="7" y="6.1" width="3.6" height="2.9" fill="none" stroke="#56606c" stroke-width="1"/><path d="M7.9 6.1 V5.1 H9.7 V6.1" fill="none" stroke="#56606c" stroke-width="0.8"/></svg>
<div class="t" style="left:462.0px;top:528.56px;font-size:9.5px;color:#333;font-weight:400;letter-spacing:-0.2px;">unknown</div>
<div class="t" style="left:690.0px;top:528.56px;font-size:9.5px;color:#333;font-weight:400;letter-spacing:-0.5px;">239.255.255....</div>
<div class="t" style="left:762.5px;top:528.56px;font-size:9.5px;color:#333;font-weight:400;letter-spacing:-0.55px;">1900</div>
<div class="t" style="left:842.5px;top:528.56px;font-size:9.5px;color:#333;font-weight:400;letter-spacing:-0.5px;">[kakeru検証]CFWの許...</div>
<svg style="position:absolute;left:947px;top:526.3px" width="10" height="10" viewBox="0 0 10 10"><circle cx="5.3" cy="5.2" r="3.6" fill="#599f55"/><path d="M3.6 5.3 L4.8 6.5 L7 4.1" fill="none" stroke="#e8f5e6" stroke-width="1.1"/></svg>
<div class="t" style="left:959.5px;top:528.56px;font-size:9.5px;color:#333;font-weight:400;letter-spacing:-0.4px;">Allow</div>
<div class="t" style="left:1053.5px;top:528.56px;font-size:9.5px;color:#333;font-weight:400;letter-spacing:-0.55px;">0 Bytes</div>
<div style="position:absolute;left:147px;top:585.3px;width:1029px;height:1px;background:#ececec"></div>
<svg style="position:absolute;left:162px;top:562.3px" width="11" height="11" viewBox="0 0 11 11"><circle cx="4.6" cy="4.4" r="3" fill="none" stroke="#4a4a4a" stroke-width="1.0"/><path d="M6.8 6.6 L9 8.8" stroke="#4a4a4a" stroke-width="1.3"/><path d="M4.6 2.9 V5.9 M3.1 4.4 H6.1" stroke="#4a4a4a" stroke-width="0.9"/></svg>
<div class="t" style="left:185.3px;top:563.56px;font-size:9.5px;color:#262626;font-weight:400;letter-spacing:-0.22px;">8/24/2022 7:07 PM</div>
<svg style="position:absolute;left:446px;top:563.9px" width="12" height="10" viewBox="0 0 12 10"><g fill="#56606c"><rect x="1.2" y="0.6" width="3.4" height="3.4" rx="0.6"/><rect x="5.8" y="0.6" width="3.4" height="3.4" rx="0.6"/><rect x="1.2" y="5.2" width="3.4" height="3.4" rx="0.6"/></g><rect x="7" y="6.1" width="3.6" height="2.9" fill="none" stroke="#56606c" stroke-width="1"/><path d="M7.9 6.1 V5.1 H9.7 V6.1" fill="none" stroke="#56606c" stroke-width="0.8"/></svg>
<div class="t" style="left:462.0px;top:563.56px;font-size:9.5px;color:#333;font-weight:400;letter-spacing:-0.2px;">unknown</div>
<div class="t" style="left:690.0px;top:563.56px;font-size:9.5px;color:#333;font-weight:400;letter-spacing:-0.5px;">239.255.255....</div>
<div class="t" style="left:762.5px;top:563.56px;font-size:9.5px;color:#333;font-weight:400;letter-spacing:-0.55px;">1900</div>
<div class="t" style="left:842.5px;top:563.56px;font-size:9.5px;color:#333;font-weight:400;letter-spacing:-0.5px;">[kakeru検証]CFWの許...</div>
<svg style="position:absolute;left:947px;top:561.3px" width="10" height="10" viewBox="0 0 10 10"><circle cx="5.3" cy="5.2" r="3.6" fill="#599f55"/><path d="M3.6 5.3 L4.8 6.5 L7 4.1" fill="none" stroke="#e8f5e6" stroke-width="1.1"/></svg>
<div class="t" style="left:959.5px;top:563.56px;font-size:9.5px;color:#333;font-weight:400;letter-spacing:-0.4px;">Allow</div>
<div class="t" style="left:1053.5px;top:563.56px;font-size:9.5px;color:#333;font-weight:400;letter-spacing:-0.55px;">812 Bytes</div>
<div style="position:absolute;left:147px;top:620.3px;width:1029px;height:1px;background:#ececec"></div>
<svg style="position:absolute;left:162px;top:597.3px" width="11" height="11" viewBox="0 0 11 11"><circle cx="4.6" cy="4.4" r="3" fill="none" stroke="#4a4a4a" stroke-width="1.0"/><path d="M6.8 6.6 L9 8.8" stroke="#4a4a4a" stroke-width="1.3"/><path d="M4.6 2.9 V5.9 M3.1 4.4 H6.1" stroke="#4a4a4a" stroke-width="0.9"/></svg>
<div class="t" style="left:185.3px;top:598.56px;font-size:9.5px;color:#262626;font-weight:400;letter-spacing:-0.22px;">8/24/2022 7:06 PM</div>
<svg style="position:absolute;left:446px;top:598.9px" width="12" height="10" viewBox="0 0 12 10"><g fill="#56606c"><rect x="1.2" y="0.6" width="3.4" height="3.4" rx="0.6"/><rect x="5.8" y="0.6" width="3.4" height="3.4" rx="0.6"/><rect x="1.2" y="5.2" width="3.4" height="3.4" rx="0.6"/></g><rect x="7" y="6.1" width="3.6" height="2.9" fill="none" stroke="#56606c" stroke-width="1"/><path d="M7.9 6.1 V5.1 H9.7 V6.1" fill="none" stroke="#56606c" stroke-width="0.8"/></svg>
<div class="t" style="left:462.0px;top:598.56px;font-size:9.5px;color:#333;font-weight:400;letter-spacing:-0.2px;">unknown</div>
<div class="t" style="left:690.0px;top:598.56px;font-size:9.5px;color:#333;font-weight:400;letter-spacing:-0.5px;">239.255.255....</div>
<div class="t" style="left:762.5px;top:598.56px;font-size:9.5px;color:#333;font-weight:400;letter-spacing:-0.55px;">1900</div>
<div class="t" style="left:842.5px;top:598.56px;font-size:9.5px;color:#333;font-weight:400;letter-spacing:-0.5px;">[kakeru検証]CFWの許...</div>
<svg style="position:absolute;left:947px;top:596.3px" width="10" height="10" viewBox="0 0 10 10"><circle cx="5.3" cy="5.2" r="3.6" fill="#599f55"/><path d="M3.6 5.3 L4.8 6.5 L7 4.1" fill="none" stroke="#e8f5e6" stroke-width="1.1"/></svg>
<div class="t" style="left:959.5px;top:598.56px;font-size:9.5px;color:#333;font-weight:400;letter-spacing:-0.4px;">Allow</div>
<div class="t" style="left:1053.5px;top:598.56px;font-size:9.5px;color:#333;font-weight:400;letter-spacing:-0.55px;">0 Bytes</div>
<div style="position:absolute;left:275px;top:201.3px;width:109px;height:35px;background:#fafafa"></div>
<div style="position:absolute;left:600px;top:201.3px;width:73px;height:35px;background:#fafafa"></div>
<div style="position:absolute;left:283px;top:214.3px;width:88px;height:18px;background:#e8e8e8"></div>
<div style="position:absolute;left:607px;top:212.5px;width:61px;height:15.2px;background:#e6e6e6"></div>
<div style="position:absolute;left:275px;top:236.3px;width:109px;height:35px;background:#fafafa"></div>
<div style="position:absolute;left:600px;top:236.3px;width:73px;height:35px;background:#fafafa"></div>
<div style="position:absolute;left:283px;top:249.7px;width:88px;height:18px;background:#e8e8e8"></div>
<div style="position:absolute;left:607px;top:243.1px;width:61px;height:15px;background:#e6e6e6"></div>
<div style="position:absolute;left:275px;top:271.3px;width:109px;height:35px;background:#fafafa"></div>
<div style="position:absolute;left:600px;top:271.3px;width:73px;height:35px;background:#fafafa"></div>
<div style="position:absolute;left:283px;top:285.1px;width:88px;height:18px;background:#e8e8e8"></div>
<div style="position:absolute;left:607px;top:272.8px;width:61px;height:30px;background:#efefef"></div>
<div style="position:absolute;left:275px;top:306.3px;width:109px;height:35px;background:#fafafa"></div>
<div style="position:absolute;left:600px;top:306.3px;width:73px;height:35px;background:#fafafa"></div>
<div style="position:absolute;left:283px;top:320.5px;width:88px;height:18px;background:#e8e8e8"></div>
<div style="position:absolute;left:607px;top:317.5px;width:61px;height:15.2px;background:#e6e6e6"></div>
<div style="position:absolute;left:275px;top:341.3px;width:109px;height:35px;background:#fafafa"></div>
<div style="position:absolute;left:600px;top:341.3px;width:73px;height:35px;background:#fafafa"></div>
<div style="position:absolute;left:283px;top:355.9px;width:88px;height:18px;background:#e8e8e8"></div>
<div style="position:absolute;left:607px;top:348.1px;width:61px;height:15px;background:#e6e6e6"></div>
<div style="position:absolute;left:275px;top:376.3px;width:109px;height:35px;background:#fafafa"></div>
<div style="position:absolute;left:600px;top:376.3px;width:73px;height:35px;background:#fafafa"></div>
<div style="position:absolute;left:283px;top:391.3px;width:88px;height:19px;background:#e8e8e8"></div>
<div style="position:absolute;left:607px;top:377.8px;width:61px;height:30px;background:#efefef"></div>
<div style="position:absolute;left:275px;top:411.3px;width:109px;height:35px;background:#e9f5fa"></div>
<div style="position:absolute;left:600px;top:411.3px;width:73px;height:35px;background:#e9f5fa"></div>
<div style="position:absolute;left:283px;top:426.7px;width:88px;height:19px;background:#d9e7ed"></div>
<div style="position:absolute;left:607px;top:422.5px;width:61px;height:15.2px;background:#d3e0e6"></div>
<div style="position:absolute;left:275px;top:446.3px;width:109px;height:35px;background:#f9f9f9"></div>
<div style="position:absolute;left:600px;top:446.3px;width:73px;height:35px;background:#f9f9f9"></div>
<div style="position:absolute;left:283px;top:446.3px;width:88px;height:35px;background:#f4f4f4"></div>
<div style="position:absolute;left:607px;top:453.1px;width:61px;height:15px;background:#e6e6e6"></div>
<div style="position:absolute;left:275px;top:481.3px;width:109px;height:35px;background:#f9f9f9"></div>
<div style="position:absolute;left:600px;top:481.3px;width:73px;height:35px;background:#f9f9f9"></div>
<div style="position:absolute;left:283px;top:481.3px;width:88px;height:35px;background:#f4f4f4"></div>
<div style="position:absolute;left:607px;top:482.8px;width:61px;height:30px;background:#efefef"></div>
<div style="position:absolute;left:275px;top:516.3px;width:109px;height:35px;background:#f9f9f9"></div>
<div style="position:absolute;left:600px;top:516.3px;width:73px;height:35px;background:#f9f9f9"></div>
<div style="position:absolute;left:283px;top:516.3px;width:88px;height:35px;background:#f4f4f4"></div>
<div style="position:absolute;left:607px;top:527.5px;width:61px;height:15.2px;background:#e6e6e6"></div>
<div style="position:absolute;left:275px;top:551.3px;width:109px;height:35px;background:#f9f9f9"></div>
<div style="position:absolute;left:600px;top:551.3px;width:73px;height:35px;background:#f9f9f9"></div>
<div style="position:absolute;left:283px;top:551.3px;width:88px;height:35px;background:#f4f4f4"></div>
<div style="position:absolute;left:607px;top:558.1px;width:61px;height:15px;background:#e6e6e6"></div>
<div style="position:absolute;left:275px;top:586.3px;width:109px;height:35px;background:#f9f9f9"></div>
<div style="position:absolute;left:600px;top:586.3px;width:73px;height:35px;background:#f9f9f9"></div>
<div style="position:absolute;left:283px;top:586.3px;width:88px;height:35px;background:#f4f4f4"></div>
<div style="position:absolute;left:607px;top:587.8px;width:61px;height:30px;background:#efefef"></div>
<div style="position:absolute;left:434px;top:178px;width:132px;height:84px;border:4px solid #f9290b;border-radius:2px"></div>
<svg style="position:absolute;left:0;top:0" width="1200" height="606" viewBox="0 0 1200 606">
<path d="M587.6 218.2 L611.6 196.8 L612.3 205 L721 181.5 Q724.3 181.8 721.6 184.7 L615.6 217 L619.2 224.8 Z" fill="#f9290b"/>
</svg>
<div style="position:absolute;left:0;top:1px;width:1200px;height:1px;background:rgba(0,0,0,0.47)"></div>
<div style="position:absolute;left:0;top:2px;width:1200px;height:1px;background:rgba(0,0,0,0.06)"></div>
<div style="position:absolute;left:0;top:604px;width:1200px;height:1px;background:rgba(0,0,0,0.5)"></div>
<div style="position:absolute;left:0;top:603px;width:1200px;height:1px;background:rgba(0,0,0,0.05)"></div>
<div style="position:absolute;left:1px;top:0;width:1px;height:606px;background:rgba(0,0,0,0.55)"></div>
<div style="position:absolute;left:1197px;top:0;width:1px;height:606px;background:rgba(0,0,0,0.5)"></div>
<div style="position:absolute;left:1196px;top:0;width:1px;height:606px;background:rgba(0,0,0,0.06)"></div>
</div></div></body></html>
